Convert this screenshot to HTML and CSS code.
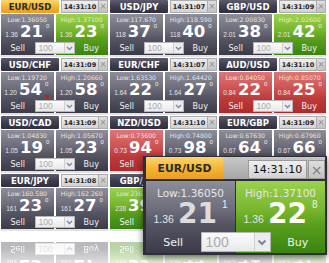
FILE: index.html
```html
<!DOCTYPE html>
<html>
<head>
<meta charset="utf-8">
<link rel="stylesheet" href="styles.css">
</head>
<body>
<div class="board">
  <div class="grid">
    <div class="tile">
      <div class="head"><div class="pair active">EUR/USD</div><div class="time">14:31:10</div><div class="close">×</div></div>
      <div class="body">
        <div class="panel sell grey"><div class="range">Low:1.36050</div><div class="price"><span class="pre">1.36</span><span class="big">21</span><span class="pip">0</span></div></div>
        <div class="panel buy green"><div class="range">High:1.37100</div><div class="price"><span class="pre">1.36</span><span class="big">23</span><span class="pip">0</span></div></div>
        <div class="trade"><span class="act">Sell</span><div class="qty"><span class="qty-val">100</span><span class="qty-arrow"><svg width="7" height="5" viewBox="0 0 7 5"><path d="M1 1l2.5 2.5L6 1" fill="none" stroke="#7a8aa2" stroke-width="1.4"/></svg></span></div><span class="act">Buy</span></div>
      </div>
    </div>
    <div class="tile">
      <div class="head"><div class="pair">USD/JPY</div><div class="time">14:31:07</div><div class="close">×</div></div>
      <div class="body">
        <div class="panel sell grey"><div class="range">Low:117.670</div><div class="price"><span class="pre">118</span><span class="big">37</span><span class="pip">0</span></div></div>
        <div class="panel buy grey"><div class="range">High:118.590</div><div class="price"><span class="pre">118</span><span class="big">40</span><span class="pip">0</span></div></div>
        <div class="trade"><span class="act">Sell</span><div class="qty"><span class="qty-val">100</span><span class="qty-arrow"><svg width="7" height="5" viewBox="0 0 7 5"><path d="M1 1l2.5 2.5L6 1" fill="none" stroke="#7a8aa2" stroke-width="1.4"/></svg></span></div><span class="act">Buy</span></div>
      </div>
    </div>
    <div class="tile">
      <div class="head"><div class="pair">GBP/USD</div><div class="time">14:31:09</div><div class="close">×</div></div>
      <div class="body">
        <div class="panel sell grey"><div class="range">Low:2.00830</div><div class="price"><span class="pre">2.01</span><span class="big">38</span><span class="pip">0</span></div></div>
        <div class="panel buy green"><div class="range">High:2.02600</div><div class="price"><span class="pre">2.01</span><span class="big">42</span><span class="pip">0</span></div></div>
        <div class="trade"><span class="act">Sell</span><div class="qty"><span class="qty-val">100</span><span class="qty-arrow"><svg width="7" height="5" viewBox="0 0 7 5"><path d="M1 1l2.5 2.5L6 1" fill="none" stroke="#7a8aa2" stroke-width="1.4"/></svg></span></div><span class="act">Buy</span></div>
      </div>
    </div>

    <div class="tile">
      <div class="head"><div class="pair">USD/CHF</div><div class="time">14:31:09</div><div class="close">×</div></div>
      <div class="body">
        <div class="panel sell grey"><div class="range">Low:1.19720</div><div class="price"><span class="pre">1.20</span><span class="big">54</span><span class="pip">0</span><i class="down"></i></div></div>
        <div class="panel buy grey"><div class="range">High:1.20660</div><div class="price"><span class="pre">1.20</span><span class="big">58</span><span class="pip">0</span></div></div>
        <div class="trade"><span class="act">Sell</span><div class="qty"><span class="qty-val">100</span><span class="qty-arrow"><svg width="7" height="5" viewBox="0 0 7 5"><path d="M1 1l2.5 2.5L6 1" fill="none" stroke="#7a8aa2" stroke-width="1.4"/></svg></span></div><span class="act">Buy</span></div>
      </div>
    </div>
    <div class="tile">
      <div class="head"><div class="pair">EUR/CHF</div><div class="time">14:31:07</div><div class="close">×</div></div>
      <div class="body">
        <div class="panel sell grey"><div class="range">Low:1.63530</div><div class="price"><span class="pre">1.64</span><span class="big">22</span><span class="pip">0</span></div></div>
        <div class="panel buy grey"><div class="range">High:1.64420</div><div class="price"><span class="pre">1.64</span><span class="big">27</span><span class="pip">0</span></div></div>
        <div class="trade"><span class="act">Sell</span><div class="qty"><span class="qty-val">100</span><span class="qty-arrow"><svg width="7" height="5" viewBox="0 0 7 5"><path d="M1 1l2.5 2.5L6 1" fill="none" stroke="#7a8aa2" stroke-width="1.4"/></svg></span></div><span class="act">Buy</span></div>
      </div>
    </div>
    <div class="tile">
      <div class="head"><div class="pair">AUD/USD</div><div class="time">14:31:10</div><div class="close">×</div></div>
      <div class="body">
        <div class="panel sell red"><div class="range">Low:0.84050</div><div class="price"><span class="pre">0.84</span><span class="big">22</span><span class="pip">0</span></div></div>
        <div class="panel buy red"><div class="range">High:0.85070</div><div class="price"><span class="pre">0.84</span><span class="big">25</span><span class="pip">0</span></div></div>
        <div class="trade"><span class="act">Sell</span><div class="qty"><span class="qty-val">100</span><span class="qty-arrow"><svg width="7" height="5" viewBox="0 0 7 5"><path d="M1 1l2.5 2.5L6 1" fill="none" stroke="#7a8aa2" stroke-width="1.4"/></svg></span></div><span class="act">Buy</span></div>
      </div>
    </div>

    <div class="tile">
      <div class="head"><div class="pair">USD/CAD</div><div class="time">14:31:09</div><div class="close">×</div></div>
      <div class="body">
        <div class="panel sell grey"><div class="range">Low:1.04830</div><div class="price"><span class="pre">1.05</span><span class="big">19</span><span class="pip">0</span></div></div>
        <div class="panel buy grey"><div class="range">High:1.05670</div><div class="price"><span class="pre">1.05</span><span class="big">23</span><span class="pip">0</span></div></div>
        <div class="trade"><span class="act">Sell</span><div class="qty"><span class="qty-val">100</span><span class="qty-arrow"><svg width="7" height="5" viewBox="0 0 7 5"><path d="M1 1l2.5 2.5L6 1" fill="none" stroke="#7a8aa2" stroke-width="1.4"/></svg></span></div><span class="act">Buy</span></div>
      </div>
    </div>
    <div class="tile">
      <div class="head"><div class="pair">NZD/USD</div><div class="time">14:31:10</div><div class="close">×</div></div>
      <div class="body">
        <div class="panel sell red"><div class="range">Low:0.73600</div><div class="price"><span class="pre">0.73</span><span class="big">94</span><span class="pip">0</span></div></div>
        <div class="panel buy grey"><div class="range">High:0.74800</div><div class="price"><span class="pre">0.73</span><span class="big">98</span><span class="pip">0</span></div></div>
        <div class="trade"><span class="act">Sell</span><div class="qty"><span class="qty-val">100</span><span class="qty-arrow"><svg width="7" height="5" viewBox="0 0 7 5"><path d="M1 1l2.5 2.5L6 1" fill="none" stroke="#7a8aa2" stroke-width="1.4"/></svg></span></div><span class="act">Buy</span></div>
      </div>
    </div>
    <div class="tile">
      <div class="head"><div class="pair">EUR/GBP</div><div class="time">14:31:09</div><div class="close">×</div></div>
      <div class="body">
        <div class="panel sell grey"><div class="range">Low:0.67630</div><div class="price"><span class="pre">0.67</span><span class="big">64</span><span class="pip">0</span></div></div>
        <div class="panel buy grey"><div class="range">High:0.67960</div><div class="price"><span class="pre">0.67</span><span class="big">66</span><span class="pip">0</span></div></div>
        <div class="trade"><span class="act">Sell</span><div class="qty"><span class="qty-val">100</span><span class="qty-arrow"><svg width="7" height="5" viewBox="0 0 7 5"><path d="M1 1l2.5 2.5L6 1" fill="none" stroke="#7a8aa2" stroke-width="1.4"/></svg></span></div><span class="act">Buy</span></div>
      </div>
    </div>

    <div class="tile">
      <div class="head"><div class="pair">EUR/JPY</div><div class="time">14:31:08</div><div class="close">×</div></div>
      <div class="body">
        <div class="panel sell grey"><div class="range">Low:160.580</div><div class="price"><span class="pre">161</span><span class="big">23</span><span class="pip">0</span></div></div>
        <div class="panel buy grey"><div class="range">High:162.260</div><div class="price"><span class="pre">161</span><span class="big">27</span><span class="pip">0</span></div></div>
        <div class="trade"><span class="act">Sell</span><div class="qty"><span class="qty-val">100</span><span class="qty-arrow"><svg width="7" height="5" viewBox="0 0 7 5"><path d="M1 1l2.5 2.5L6 1" fill="none" stroke="#7a8aa2" stroke-width="1.4"/></svg></span></div><span class="act">Buy</span></div>
      </div>
    </div>
    <div class="tile">
      <div class="head"><div class="pair">GBP/JPY</div><div class="time">14:31:10</div><div class="close">×</div></div>
      <div class="body">
        <div class="panel sell green"><div class="range">Low:236.010</div><div class="price"><span class="pre">238</span><span class="big">39</span><span class="pip">0</span></div></div>
        <div class="panel buy green"><div class="range">High:239.150</div><div class="price"><span class="pre">238</span><span class="big">44</span><span class="pip">0</span></div></div>
        <div class="trade"><span class="act">Sell</span><div class="qty"><span class="qty-val">100</span><span class="qty-arrow"><svg width="7" height="5" viewBox="0 0 7 5"><path d="M1 1l2.5 2.5L6 1" fill="none" stroke="#7a8aa2" stroke-width="1.4"/></svg></span></div><span class="act">Buy</span></div>
      </div>
    </div>
    <div class="tile">
      <div class="head"><div class="pair">CHF/JPY</div><div class="time">14:31:09</div><div class="close">×</div></div>
      <div class="body">
        <div class="panel sell grey"><div class="range">Low:97.850</div><div class="price"><span class="pre">98.2</span><span class="big">41</span><span class="pip">0</span></div></div>
        <div class="panel buy grey"><div class="range">High:98.660</div><div class="price"><span class="pre">98.2</span><span class="big">47</span><span class="pip">0</span></div></div>
        <div class="trade"><span class="act">Sell</span><div class="qty"><span class="qty-val">100</span><span class="qty-arrow"><svg width="7" height="5" viewBox="0 0 7 5"><path d="M1 1l2.5 2.5L6 1" fill="none" stroke="#7a8aa2" stroke-width="1.4"/></svg></span></div><span class="act">Buy</span></div>
      </div>
    </div>

    <div class="reflect" aria-hidden="true">
      <div class="ghost">
        <div class="panel sell grey"><div class="range">Low:160.580</div><div class="price"><span class="pre">161</span><span class="big">23</span><span class="pip">0</span></div></div>
        <div class="panel buy grey"><div class="range">High:162.260</div><div class="price"><span class="pre">161</span><span class="big">27</span><span class="pip">0</span></div></div>
        <div class="trade"><span class="act">Sell</span><div class="qty"><span class="qty-val">100</span><span class="qty-arrow"><svg width="7" height="5" viewBox="0 0 7 5"><path d="M1 1l2.5 2.5L6 1" fill="none" stroke="#7a8aa2" stroke-width="1.4"/></svg></span></div><span class="act">Buy</span></div>
      </div>
      <div class="ghost">
        <div class="panel sell green"><div class="range">Low:236.010</div><div class="price"><span class="pre">238</span><span class="big">39</span><span class="pip">0</span></div></div>
        <div class="panel buy green"><div class="range">High:239.150</div><div class="price"><span class="pre">238</span><span class="big">44</span><span class="pip">0</span></div></div>
        <div class="trade"><span class="act">Sell</span><div class="qty"><span class="qty-val">100</span><span class="qty-arrow"><svg width="7" height="5" viewBox="0 0 7 5"><path d="M1 1l2.5 2.5L6 1" fill="none" stroke="#7a8aa2" stroke-width="1.4"/></svg></span></div><span class="act">Buy</span></div>
      </div>
      <div class="ghost">
        <div class="panel sell grey"><div class="range">Low:97.850</div><div class="price"><span class="pre">98.2</span><span class="big">41</span><span class="pip">0</span></div></div>
        <div class="panel buy green"><div class="range">High:98.660</div><div class="price"><span class="pre">98.2</span><span class="big">47</span><span class="pip">0</span></div></div>
        <div class="trade"><span class="act">Sell</span><div class="qty"><span class="qty-val">100</span><span class="qty-arrow"><svg width="7" height="5" viewBox="0 0 7 5"><path d="M1 1l2.5 2.5L6 1" fill="none" stroke="#7a8aa2" stroke-width="1.4"/></svg></span></div><span class="act">Buy</span></div>
      </div>
    </div>
  </div>

  <div class="tile lg">
    <div class="head"><div class="pair active">EUR/USD</div><div class="time">14:31:10</div><div class="close">×</div></div>
    <div class="body">
      <div class="panel sell grey"><div class="range">Low:1.36050</div><div class="price"><span class="pre">1.36</span><span class="big dim">21</span><span class="pip">1</span></div></div>
      <div class="panel buy green"><div class="range">High:1.37100</div><div class="price"><span class="pre">1.36</span><span class="big">22</span><span class="pip">8</span></div></div>
      <div class="trade"><span class="act">Sell</span><div class="qty"><span class="qty-val">100</span><span class="qty-arrow"><svg width="10" height="7" viewBox="0 0 10 7"><path d="M1.5 1.5l3.5 3.5 3.5-3.5" fill="none" stroke="#7a8aa2" stroke-width="2"/></svg></span></div><span class="act">Buy</span></div>
    </div>
  </div>
</div>
</body>
</html>
```
FILE: styles.css
```css
* { box-sizing: border-box; margin: 0; padding: 0; }
html, body { background: #fff; }
body {
  width: 329px;
  height: 263px;
  overflow: hidden;
  font-family: "DejaVu Sans", sans-serif;
}
.board { position: relative; width: 329px; height: 263px; overflow: hidden; }

.grid {
  display: grid;
  grid-template-columns: repeat(3, 107px);
  grid-auto-rows: 55px;
  column-gap: 2px;
  row-gap: 3px;
  padding-left: 1px;
}
.tile {
  display: flex;
  flex-direction: column;
  box-shadow: 0 2px 0 #e2e2e2;
}

/* header */
.head { display: flex; height: 13px; }
.pair {
  width: 58px;
  display: flex;
  align-items: center;
  justify-content: center;
  font-weight: bold;
  font-size: 8.5px;
  color: #fff;
  background: linear-gradient(#5c5c6e, #3e3e4e 50%, #2e2e3c);
  border-radius: 1px;
}
.pair.active {
  background: linear-gradient(#fcd670, #f4b536 50%, #ec9e1c);
  color: #2a2a2a;
}
.time {
  margin-left: auto;
  width: 37px;
  display: flex;
  align-items: center;
  justify-content: center;
  font-size: 6.5px;
  font-weight: bold;
  color: #222;
  background: linear-gradient(#efefef, #d2d2d2);
  border: 1px solid #adadad;
  border-right: 0;
}
.close {
  width: 10px;
  display: flex;
  align-items: center;
  justify-content: center;
  font-size: 8px;
  color: #8a8a8a;
  background: linear-gradient(#dedede, #c2c2c2);
  border: 1px solid #adadad;
}

/* body */
.body, .ghost {
  display: grid;
  grid-template-columns: 1fr 1fr;
  grid-template-rows: 27px 14px;
  column-gap: 2px;
}
.body { flex: 1; margin-top: 1px; }
.panel { grid-row: 1 / 3; padding-top: 2px; text-align: center; }
.panel.sell { grid-column: 1; }
.panel.buy { grid-column: 2; }
.grey { background: linear-gradient(#8e8e9a, #6e6e7c 38%, #555564 60%, #3a3a48); }
.green { background: linear-gradient(#9ad24e, #78b62e 40%, #5aa01c 60%, #3a8410); }
.red { background: linear-gradient(#de7676, #cc4e4e 45%, #bc3a3a 65%, #ac2c2c); }

.range { font-size: 6.2px; line-height: 7px; color: #e6e6e6; }
.price {
  display: flex;
  justify-content: center;
  align-items: baseline;
  height: 17px;
}
.pre {
  font-family: "Liberation Sans", sans-serif;
  font-size: 6.5px;
  color: #e4e4e4;
  margin-right: 2px;
}
.big { font-weight: bold; font-size: 16.5px; line-height: 17px; color: #fff; }
.big.dim { color: #dcdcdc; }
.pip {
  align-self: flex-start;
  font-family: "Liberation Sans", sans-serif;
  font-size: 6px;
  line-height: 7px;
  color: #f0f0f0;
  margin-left: 3px;
}
.down {
  align-self: flex-end;
  margin: 0 0 -1px -4px;
  width: 0;
  height: 0;
  border-left: 3px solid transparent;
  border-right: 3px solid transparent;
  border-top: 4px solid #d8141a;
}

.trade {
  grid-row: 2;
  grid-column: 1 / 3;
  display: flex;
  align-items: center;
}
.act { flex: 1; text-align: center; font-size: 8px; color: #f2f2f2; }
.qty {
  width: 40px;
  height: 12px;
  display: flex;
  background: linear-gradient(#fbfbfb, #e9e9e9);
  border: 1px solid #b6b6b6;
}
.qty-val {
  flex: 1;
  font-family: "Liberation Sans", sans-serif;
  font-size: 8.5px;
  line-height: 10px;
  color: #aaa;
  padding-left: 3px;
}
.qty-arrow {
  width: 10px;
  display: flex;
  align-items: center;
  justify-content: center;
  border-left: 1px solid #cfcfcf;
  background: #ececec;
}

/* mirrored reflection under the last row */
.reflect {
  grid-column: 1 / -1;
  display: grid;
  grid-template-columns: repeat(3, 107px);
  column-gap: 2px;
  align-items: start;
  margin-top: 10px;
}
.ghost {
  height: 41px;
  transform: scaleY(-1);
  opacity: 0.36;
  -webkit-mask-image: linear-gradient(to bottom, transparent 10%, #000 80%);
  mask-image: linear-gradient(to bottom, transparent 10%, #000 80%);
}

/* large floating tile */
.lg {
  position: absolute;
  left: 143px;
  top: 156px;
  width: 184px;
  background: #2e2e36;
  padding: 1px 2px 2px 3px;
  box-shadow: 0 2px 7px rgba(0, 0, 0, 0.55);
}
.lg .head { height: 22px; background: linear-gradient(#c8c8c8, #a6a6a6); }
.lg .pair { width: 77px; font-size: 10.8px; border-radius: 2px 2px 0 0; }
.lg .time {
  width: 59px;
  margin-top: 3px;
  font-size: 11px;
  font-weight: normal;
  color: #111;
  border: 1px solid #9a9a9a;
}
.lg .close {
  width: 17px;
  margin: 3px 0 0 1px;
  font-size: 14px;
  color: #7c7c7c;
  border: 1px solid #9a9a9a;
}
.lg .body { margin-top: 2px; grid-template-rows: 50px 22px; column-gap: 1px; }
.lg .panel { padding-top: 6px; }
.lg .range { font-size: 10.5px; line-height: 12px; }
.lg .price { height: 28px; margin-top: 1px; }
.lg .pre { font-size: 10.5px; margin-right: 4px; }
.lg .big { font-size: 28px; line-height: 28px; }
.lg .pip { font-size: 10px; line-height: 10px; margin-left: 5px; }
.lg .act { font-size: 11px; }
.lg .qty { width: 70px; height: 20px; }
.lg .qty-val { font-size: 14px; line-height: 18px; padding-left: 4px; }
.lg .qty-arrow { width: 16px; }
```
